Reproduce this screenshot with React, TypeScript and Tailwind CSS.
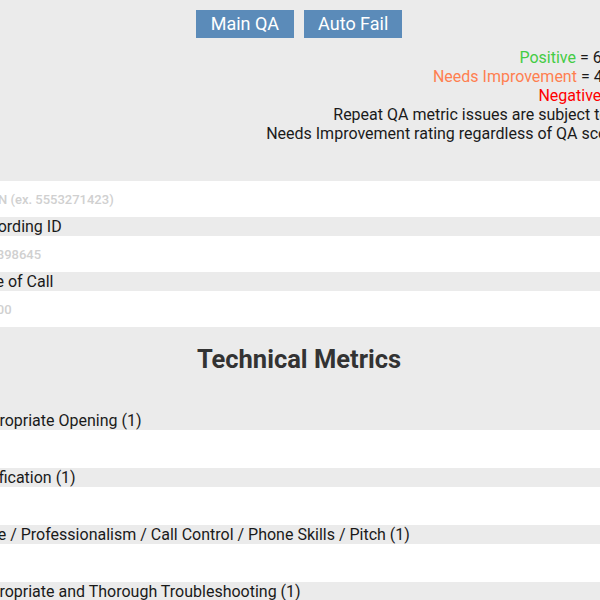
import React from "react";

const Label = ({ children }: { children: React.ReactNode }) => (
  <div className="h-[19px] leading-[19px] text-[16px] text-[#1a1a1a] whitespace-nowrap">{children}</div>
);

const Input = ({ placeholder, h = "h-[36px]" }: { placeholder?: string; h?: string }) => (
  <div className={`${h} bg-white flex items-center pl-[11px] pt-[1px] text-[13px] font-medium text-[#d0d0d0] whitespace-nowrap`}>
    {placeholder}
  </div>
);

export default function App() {
  return (
    <div className="w-[600px] h-[600px] overflow-hidden bg-[#ebebeb] font-['Roboto',sans-serif]">
      <div className="ml-[-29px] mr-[-27px]">
        <div className="flex justify-center gap-[10px] pt-[10px]">
          <button className="h-[28px] px-[15px] bg-[#5b8bb9] text-white text-[18px] leading-[28px]">Main QA</button>
          <button className="h-[28px] px-[14px] bg-[#5b8bb9] text-white text-[18px] leading-[28px]">Auto Fail</button>
        </div>
        <div className="mt-[10px] mb-[38px] mr-[6px] text-right text-[16px] leading-[19px] text-[#1a1a1a] whitespace-nowrap">
          <div className="mr-[-2px]"><span className="text-[#44cc44]">Positive</span> = 6 - 7</div>
          <div className="mr-[-3px]"><span className="text-[#ff7f50]">Needs Improvement</span> = 4 - 5</div>
          <div className="mr-[-6px]"><span className="text-[#ff0000]">Negative</span> = 0</div>
          <div>Repeat QA metric issues are subject to a</div>
          <div>Needs Improvement rating regardless of QA score</div>
        </div>
        <Input placeholder="BTN (ex. 5553271423)" />
        <Label>Recording ID</Label>
        <Input placeholder="12898645" />
        <Label>Date of Call</Label>
        <Input placeholder="1200" />
        <h2 className="mt-[17px] mb-[37px] text-center text-[25.5px] leading-[30px] font-bold text-[#333333]">Technical Metrics</h2>
        <Label>Appropriate Opening (1)</Label>
        <Input h="h-[38px]" />
        <Label>Verification (1)</Label>
        <Input h="h-[38px]" />
        <Label>Tone / Professionalism / Call Control / Phone Skills / Pitch (1)</Label>
        <Input h="h-[38px]" />
        <Label>Appropriate and Thorough Troubleshooting (1)</Label>
        <Input h="h-[38px]" />
      </div>
    </div>
  );
}
